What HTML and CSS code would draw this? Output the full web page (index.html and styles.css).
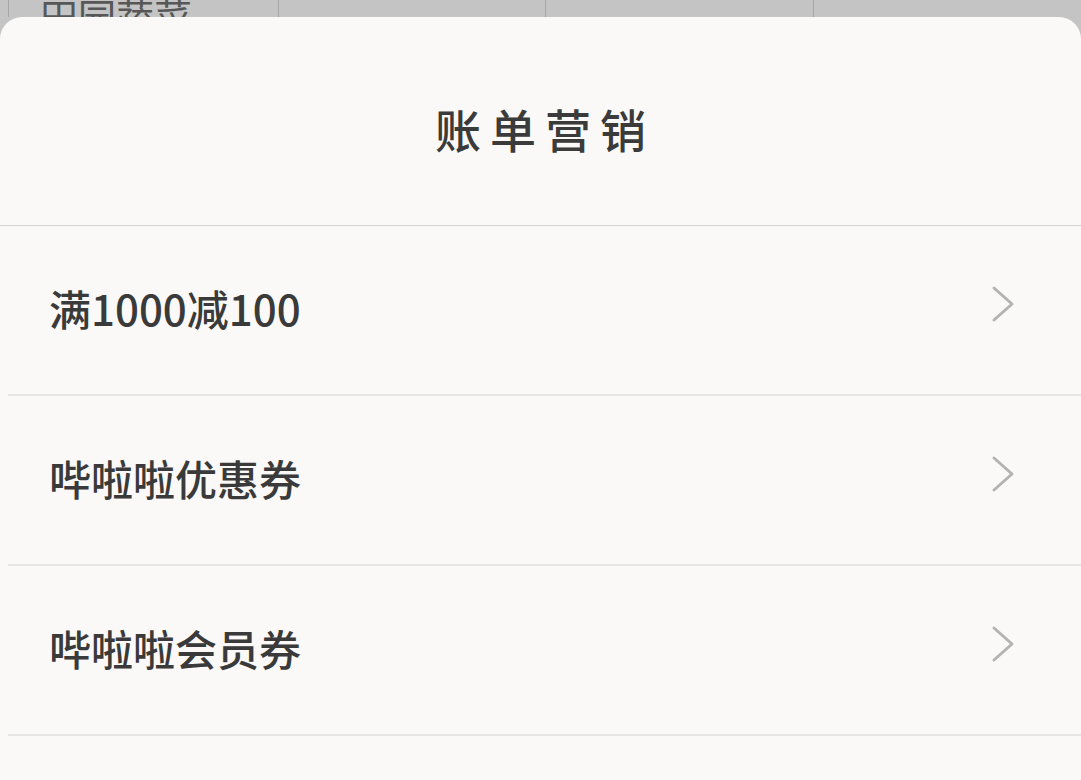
FILE: index.html
```html
<!DOCTYPE html>
<html lang="zh">
<head>
<meta charset="utf-8">
<title>账单营销</title>
<link rel="stylesheet" href="styles.css">
</head>
<body>
<div class="backdrop">
  <div class="cell"><span class="cell-text">田园蔬菜</span></div>
  <div class="cell"></div>
  <div class="cell"></div>
  <div class="cell"></div>
</div>
<div class="sheet">
  <div class="sheet-header"><h1 class="sheet-title">账单营销</h1></div>
  <ul class="menu">
    <li class="menu-item"><span class="menu-label">满1000减100</span>
      <svg class="chevron" viewBox="0 0 24 40" width="24" height="40"><polyline points="3,3 21,19 3,35" fill="none" stroke="#b3b3b3" stroke-width="3" stroke-linecap="round" stroke-linejoin="round"/></svg>
    </li>
    <li class="menu-item"><span class="menu-label">哔啦啦优惠券</span>
      <svg class="chevron" viewBox="0 0 24 40" width="24" height="40"><polyline points="3,3 21,19 3,35" fill="none" stroke="#b3b3b3" stroke-width="3" stroke-linecap="round" stroke-linejoin="round"/></svg>
    </li>
    <li class="menu-item"><span class="menu-label">哔啦啦会员券</span>
      <svg class="chevron" viewBox="0 0 24 40" width="24" height="40"><polyline points="3,3 21,19 3,35" fill="none" stroke="#b3b3b3" stroke-width="3" stroke-linecap="round" stroke-linejoin="round"/></svg>
    </li>
    <li class="menu-item"></li>
  </ul>
</div>
</body>
</html>
```
FILE: styles.css
```css
html, body {
  margin: 0;
  padding: 0;
  height: 100%;
  overflow: hidden;
}
body {
  background: #c4c4c4;
  font-family: "Noto Sans CJK SC", "Noto Sans", sans-serif;
}
.backdrop {
  display: grid;
  grid-template-columns: 270px 267px 268px 1fr;
  height: 17px;
  overflow: hidden;
  padding-left: 8px;
}
.cell {
  border-left: 1px solid #a6a6a6;
  overflow: hidden;
}
.cell-text {
  display: block;
  margin-top: -7px;
  margin-left: 31px;
  font-size: 38px;
  line-height: 44px;
  color: #575757;
  white-space: nowrap;
}
.sheet {
  background: #faf9f7;
  border-radius: 22px 22px 0 0;
  height: calc(100vh - 17px);
  overflow: hidden;
}
.sheet-header {
  height: 209px;
  box-sizing: border-box;
  padding-top: 14px;
  display: flex;
  align-items: center;
  justify-content: center;
  border-bottom: 1px solid #d3d3d2;
}
.sheet-title {
  margin: 0;
  font-size: 46px;
  font-weight: 500;
  letter-spacing: 9px;
  padding-left: 9px;
  color: #3b3b3b;
  line-height: 1;
}
.menu {
  list-style: none;
  margin: 0;
  padding: 0;
}
.menu-item {
  height: 168px;
  margin-left: 8px;
  border-bottom: 2px solid #e7e6e4;
  display: flex;
  align-items: center;
  justify-content: space-between;
  padding: 0 66px 0 41px;
}
.menu-label {
  font-size: 42px;
  font-weight: 500;
  color: #3a3a3a;
  line-height: 1;
  margin-top: -4px;
}
.chevron {
  display: block;
  margin-top: -10px;
}
```
